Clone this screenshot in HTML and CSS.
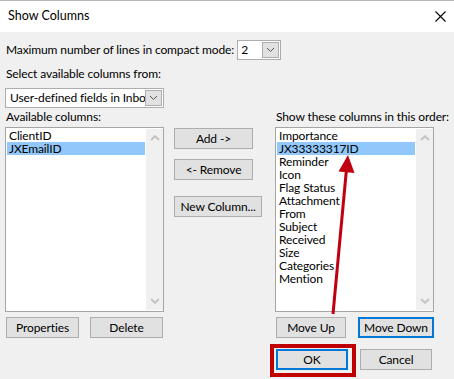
FILE: index.html
```html
<!DOCTYPE html>
<html>
<head>
<meta charset="utf-8">
<link rel="stylesheet" href="styles.css">
</head>
<body>
<div class="win">
  <div class="titlebar">
    <span class="title">Show Columns</span>
    <svg class="close" width="11" height="11" viewBox="0 0 11 11"><path d="M0.5 0.5 L10.5 10.5 M10.5 0.5 L0.5 10.5" stroke="#000" stroke-width="1.1" fill="none"/></svg>
  </div>
  <div class="content">
    <div class="row1">
      <span class="lbl-inline">Maximum number of lines in compact mode:</span>
      <div class="combo combo-small">
        <span class="val">2</span>
        <span class="drop"><svg width="9" height="6" viewBox="0 0 9 6"><path d="M1 1 L4.5 4.5 L8 1" stroke="#555" stroke-width="1" fill="none"/></svg></span>
      </div>
    </div>
    <div class="lbl sel-lbl">Select available columns from:</div>
    <div class="combo combo-wide">
      <span class="val">User-defined fields in Inbox</span>
      <span class="drop"><svg width="9" height="6" viewBox="0 0 9 6"><path d="M1 1 L4.5 4.5 L8 1" stroke="#555" stroke-width="1" fill="none"/></svg></span>
    </div>
    <div class="cols">
      <div class="col col-left">
        <div class="lbl col-lbl">Available columns:</div>
        <div class="listbox">
          <div class="items">
            <div class="item">ClientID</div>
            <div class="item selected">JXEmailID</div>
          </div>
          <div class="vscroll">
            <svg class="arr" width="10" height="6" viewBox="0 0 10 6"><path d="M1 5 L5 1.2 L9 5" stroke="#c4c4c4" stroke-width="2" fill="none"/></svg>
            <svg class="arr" width="10" height="6" viewBox="0 0 10 6"><path d="M1 1 L5 4.8 L9 1" stroke="#c4c4c4" stroke-width="2" fill="none"/></svg>
          </div>
        </div>
        <div class="btnrow btnrow-left">
          <button class="btn w73">Properties</button>
          <button class="btn w73">Delete</button>
        </div>
      </div>
      <div class="col col-mid">
        <button class="btn w79 b-add">Add -&gt;</button>
        <button class="btn w79 b-remove">&lt;- Remove</button>
        <button class="btn w88 b-new">New Column...</button>
      </div>
      <div class="col col-right">
        <div class="lbl col-lbl">Show these columns in this order:</div>
        <div class="listbox">
          <div class="items">
            <div class="item">Importance</div>
            <div class="item selected">JX33333317ID</div>
            <div class="item">Reminder</div>
            <div class="item">Icon</div>
            <div class="item">Flag Status</div>
            <div class="item">Attachment</div>
            <div class="item">From</div>
            <div class="item">Subject</div>
            <div class="item">Received</div>
            <div class="item">Size</div>
            <div class="item">Categories</div>
            <div class="item">Mention</div>
          </div>
          <div class="vscroll">
            <svg class="arr" width="10" height="6" viewBox="0 0 10 6"><path d="M1 5 L5 1.2 L9 5" stroke="#c4c4c4" stroke-width="2" fill="none"/></svg>
            <svg class="arr" width="10" height="6" viewBox="0 0 10 6"><path d="M1 1 L5 4.8 L9 1" stroke="#c4c4c4" stroke-width="2" fill="none"/></svg>
          </div>
        </div>
        <div class="btnrow btnrow-right">
          <button class="btn w72">Move Up</button>
          <button class="btn w78 focus">Move Down</button>
        </div>
        <div class="btnrow okrow">
          <span class="hl"><button class="btn w72 focus">OK</button></span>
          <button class="btn w72">Cancel</button>
        </div>
      </div>
    </div>
  </div>
  <svg class="arrow" width="454" height="379" viewBox="0 0 454 379">
    <line x1="333" y1="314" x2="346.4" y2="170" stroke="#c00010" stroke-width="3"/>
    <polygon points="348,155 354.5,173 338.5,171.5" fill="#c00010"/>
  </svg>
</div>
</body>
</html>
```

FILE: styles.css
```css
* { box-sizing: border-box; }
html, body { margin: 0; padding: 0; }
body {
  width: 454px;
  height: 379px;
  overflow: hidden;
  background: #f0f0f0;
  font-family: Lato, "Noto Sans", sans-serif;
  font-size: 12px;
  letter-spacing: -0.12px;
  color: #000;
}
.win {
  position: relative;
  width: 454px;
  height: 379px;
  background: #f0f0f0;
}
.titlebar {
  height: 32px;
  border-top: 1px solid #b9b9b9;
  background: #fff;
  display: flex;
  align-items: center;
  justify-content: space-between;
  padding: 0 8px 0 8px;
}
.title { line-height: 16px; margin-top: -2px; font-size: 12.5px; letter-spacing: 0; }
.close { margin-right: 0; margin-top: -1px; }
.content {
  padding: 8px 0 0 5px;
}
.row1 {
  display: flex;
  align-items: center;
  height: 20px;
}
.lbl-inline { padding-left: 1px; margin-right: 3px; line-height: 16px; white-space: nowrap; }
.lbl { line-height: 16px; padding-left: 1px; white-space: nowrap; }
.sel-lbl { margin-top: 6px; }
.combo {
  position: relative;
  display: flex;
  align-items: center;
  height: 20px;
  background: #fff;
  border: 1px solid #adadad;
  padding: 1px;
  overflow: hidden;
}
.combo .val {
  flex: 1;
  white-space: nowrap;
  overflow: hidden;
  padding-left: 2px;
  line-height: 16px;
}
.combo .drop {
  flex: none;
  width: 17px;
  height: 16px;
  background: #e1e1e1;
  border: 1px solid #adadad;
  display: flex;
  align-items: center;
  justify-content: center;
}
.combo-small { width: 44px; }
.combo-wide { width: 159px; margin-top: 6px; }
.combo-wide .val { padding-left: 3px; }
.cols {
  display: flex;
  align-items: flex-start;
}
.col { display: flex; flex-direction: column; }
.col-left { width: 159px; }
.col-mid { margin-left: 10px; width: 88px; padding-top: 20px; }
.col-right { margin-left: 13px; width: 159px; }
.col-lbl { margin-top: 1px; }
.listbox {
  margin-top: 2px;
  height: 185px;
  border: 1px solid #a5a5a5;
  background: #fff;
  display: flex;
}
.items {
  flex: 1;
  padding: 1px;
}
.item {
  height: 13px;
  line-height: 13px;
  padding-left: 2px;
  white-space: nowrap;
}
.item.selected { background: #91c7fa; }
.vscroll {
  width: 17px;
  margin: 1px 0;
  background: #f0f0f0;
  display: flex;
  flex-direction: column;
  justify-content: space-between;
  align-items: center;
  padding: 6px 0 6px 0;
}
.btnrow { display: flex; margin-top: 5px; }
.btnrow-left { padding-left: 1px; gap: 11px; }
.btnrow-right { padding-left: 1px; gap: 12px; }
.okrow { padding-left: 1px; gap: 12px; margin-top: 11px; }
.btn {
  height: 21px;
  background: #e1e1e1;
  border: 1px solid #adadad;
  font-family: inherit;
  font-size: 12px;
  letter-spacing: inherit;
  color: #000;
  padding: 0;
  line-height: 17px;
  text-align: center;
  white-space: nowrap;
}
.btn.focus { border: 2px solid #0078d7; }
.w72 { width: 72px; }
.w73 { width: 73px; }
.w78 { width: 78px; }
.w79 { width: 79px; }
.w88 { width: 88px; }
.b-remove { margin-top: 10px; }
.b-new { margin-top: 16px; }
.hl { position: relative; display: block; }
.hl::after {
  content: "";
  position: absolute;
  left: -6px;
  right: -8px;
  top: -5px;
  bottom: -7px;
  border: 4px solid #c00000;
}
.arrow {
  position: absolute;
  left: 0;
  top: 0;
  pointer-events: none;
}
```
